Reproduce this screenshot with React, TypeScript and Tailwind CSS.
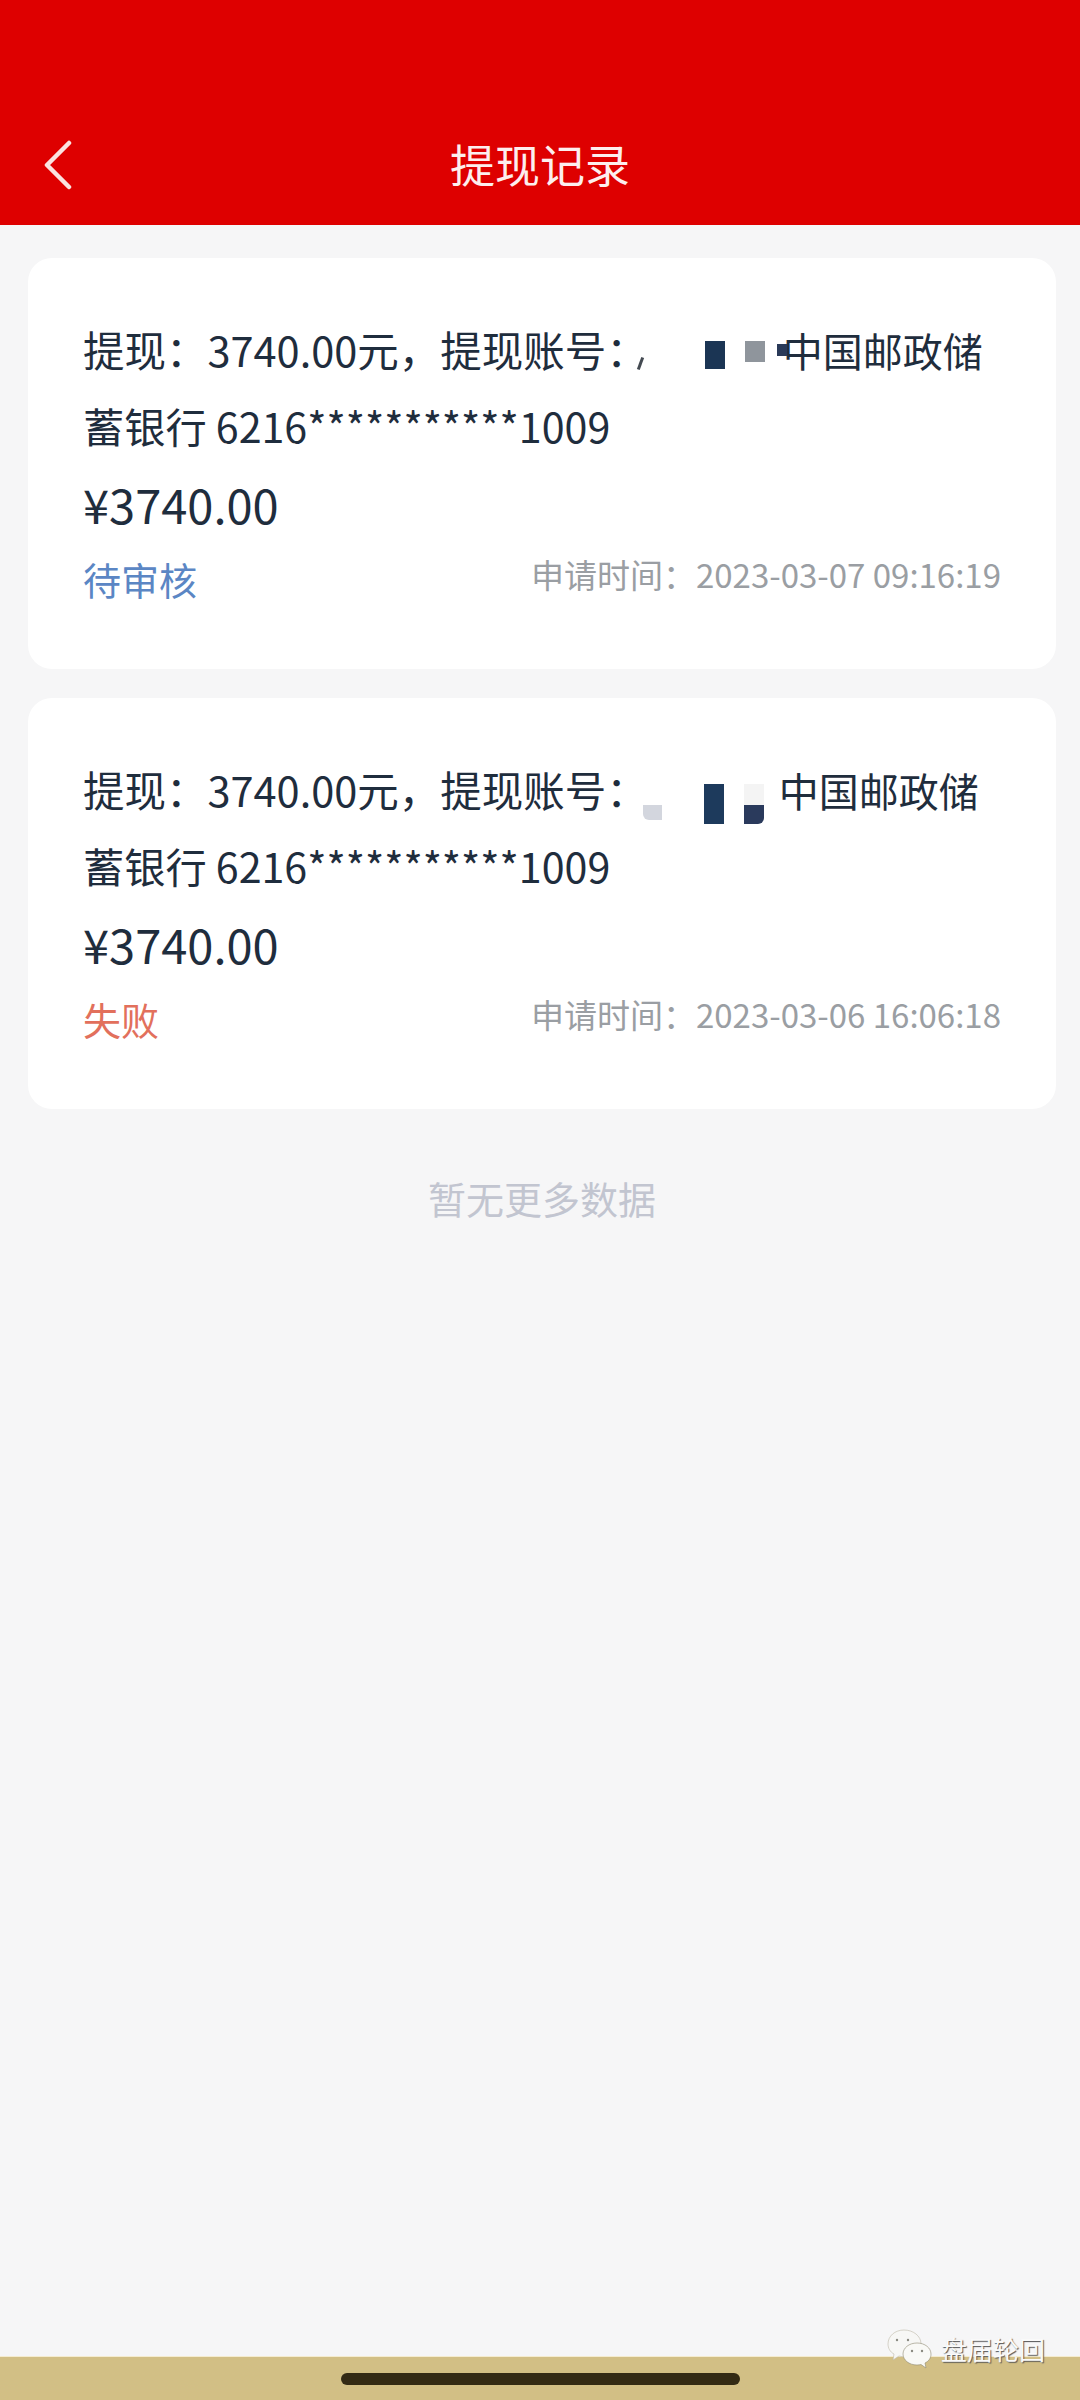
const font = { fontFamily: '"Noto Sans CJK SC", "Noto Sans", sans-serif' };

function WechatMark() {
  return (
    <svg width="46" height="40" viewBox="0 0 46 40" className="shrink-0">
      <path d="M17 1C8 1 1 7 1 15c0 4 2 8 6 10l-1 6 6-4c2 .6 4 .8 6 .8 8 0 16-5 16-13S26 1 17 1z" fill="#f7f7f5" stroke="#bdb9a8" strokeWidth="0.6" />
      <path d="M30 14c-8 0-14 5-14 11s6 11 14 11c1.500 0 3-.2 4-.5l5 3.500-1-5c4-2 6-5 6-9 0-6-6-11-14-11z" fill="#f9f9f6" stroke="#8f8a72" strokeWidth="0.6" />
      <circle cx="10" cy="11" r="1.200" fill="#8a8a80" />
      <circle cx="21" cy="11" r="1.200" fill="#8a8a80" />
      <circle cx="25" cy="22" r="1.200" fill="#8a8a80" />
      <circle cx="35" cy="22" r="1.200" fill="#8a8a80" />
    </svg>
  );
}

type Rec = {
  status: string;
  statusClass: string;
  time: string;
  gap: string;
  masks: React.ReactNode;
};

const records: Rec[] = [
  {
    status: "待审核",
    statusClass: "text-[#5b86c4]",
    time: "2023-03-07 09:16:19",
    gap: "w-[135px]",
    masks: (
      <>
        <span className="absolute left-[-9px] top-[21px] h-[13px] w-[3px] rotate-[20deg] bg-[#444a52]" />
        <span className="absolute left-[57px] top-[5px] h-[28px] w-[20px] bg-[#1b3554]" />
        <span className="absolute left-[97px] top-[5px] h-[21px] w-[20px] bg-[#8f959c]" />
        <span className="absolute left-[129px] top-[8px] h-[12px] w-[10px] bg-[#2a3a58]" />
      </>
    ),
  },
  {
    status: "失败",
    statusClass: "text-[#e2705c]",
    time: "2023-03-06 16:06:18",
    gap: "w-[131px]",
    masks: (
      <>
        <span className="absolute left-[-5px] top-[29px] h-[15px] w-[19px] rounded-bl-md bg-[#d3d6de]" />
        <span className="absolute left-[56px] top-[8px] h-[40px] w-[20px] bg-[#1d3a5c]" />
        <span className="absolute left-[96px] top-[8px] h-[21px] w-[20px] bg-[#f4f4f4]" />
        <span className="absolute left-[96px] top-[29px] h-[19px] w-[20px] rounded-br-md bg-[#2a3a5c]" />
      </>
    ),
  },
];

export default function App() {
  return (
    <div className="relative flex h-[2400px] w-[1080px] flex-col overflow-hidden bg-[#f6f6f7]" style={font}>
      <header className="grid h-[225px] shrink-0 grid-cols-[1fr_auto_1fr] items-end bg-[#de0000] pb-[29px] pl-[42px]">
        <svg width="32" height="50" viewBox="0 0 32 50" fill="none" className="mb-[6px]">
          <path d="M27 3 L5 25 L27 47" stroke="#fbe3e0" strokeWidth="4.500" strokeLinecap="round" strokeLinejoin="round" />
        </svg>
        <h1 className="-translate-x-[21px] text-[45px] leading-[64px] text-[#fdeeee]">提现记录</h1>
      </header>

      <main className="flex flex-1 flex-col gap-[29px] pl-[28px] pr-[24px] pt-[33px]">
        {records.map((r) => (
          <section key={r.time} className="h-[411px] rounded-[24px] bg-white px-[55px] pt-[54px] text-[#1f2d3d]">
            <p className="whitespace-nowrap text-[41.500px] leading-[75px]">
              提现：3740.00元，提现账号：
              <span className={`relative inline-block h-[40px] align-middle ${r.gap}`}>{r.masks}</span>
              <span className="text-[40px]">中国邮政储</span>
              <br />
              <span className="text-[41.200px]">蓄银行 6216***********1009</span>
            </p>
            <p className="mt-[2px] text-[47px] leading-[78px]">¥3740.00</p>
            <div className="flex items-start justify-between">
              <span className={`text-[38px] leading-[72px] ${r.statusClass}`}>{r.status}</span>
              <span className="text-[33px] leading-[62px] text-[#9a9ea3]">申请时间：{r.time}</span>
            </div>
          </section>
        ))}
        <p className="mt-[32px] text-center text-[38px] leading-[56px] text-[#c2c5d0]">暂无更多数据</p>
      </main>

      <footer className="flex h-[44px] shrink-0 items-center justify-center border-t border-[#f5ecd0] bg-[#d2bf85]">
        <div className="h-[12px] w-[399px] rounded-full bg-[#332a14]" />
      </footer>

      <div className="absolute left-[887px] top-[2329px] flex items-center gap-[8px]">
        <WechatMark />
        <span className="text-[26px] leading-[36px] text-[#fafafa] [text-shadow:1px_1px_1px_#555]">盘届轮回</span>
      </div>
    </div>
  );
}
